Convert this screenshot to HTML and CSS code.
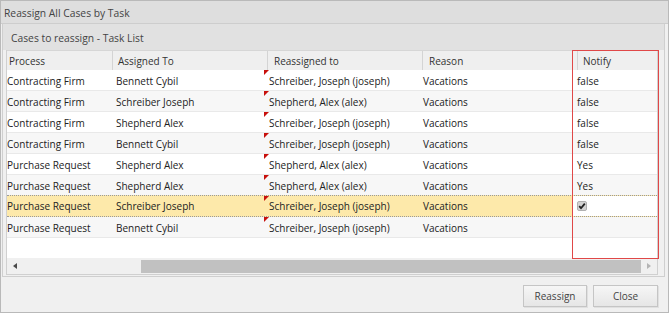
FILE: index.html
```html
<!DOCTYPE html>
<html>
<head>
<meta charset="utf-8">
<link rel="stylesheet" href="styles.css">
</head>
<body>
<div class="window">
  <div class="title">Reassign All Cases by Task</div>
  <div class="panel">
    <div class="panel-header">Cases to reassign - Task List</div>
    <div class="grid">
      <div class="ghead">
        <div class="hc h1">Process</div>
        <div class="hc h2">Assigned To</div>
        <div class="hc h3">Reassigned to</div>
        <div class="hc h4">Reason</div>
        <div class="hc h5">Notify</div>
      </div>
      <div class="gbody">
        <div class="row"><div class="c c1">Contracting Firm</div><div class="c c2">Bennett Cybil</div><div class="c c3 dirty">Schreiber, Joseph (joseph)</div><div class="c c4">Vacations</div><div class="c c5">false</div></div>
        <div class="row alt"><div class="c c1">Contracting Firm</div><div class="c c2">Schreiber Joseph</div><div class="c c3 dirty">Shepherd, Alex (alex)</div><div class="c c4">Vacations</div><div class="c c5">false</div></div>
        <div class="row"><div class="c c1">Contracting Firm</div><div class="c c2">Shepherd Alex</div><div class="c c3 dirty">Schreiber, Joseph (joseph)</div><div class="c c4">Vacations</div><div class="c c5">false</div></div>
        <div class="row alt"><div class="c c1">Contracting Firm</div><div class="c c2">Bennett Cybil</div><div class="c c3 dirty">Schreiber, Joseph (joseph)</div><div class="c c4">Vacations</div><div class="c c5">false</div></div>
        <div class="row"><div class="c c1">Purchase Request</div><div class="c c2">Shepherd Alex</div><div class="c c3 dirty">Shepherd, Alex (alex)</div><div class="c c4">Vacations</div><div class="c c5">Yes</div></div>
        <div class="row alt"><div class="c c1">Purchase Request</div><div class="c c2">Shepherd Alex</div><div class="c c3 dirty">Shepherd, Alex (alex)</div><div class="c c4">Vacations</div><div class="c c5">Yes</div></div>
        <div class="row sel"><div class="c c1">Purchase Request</div><div class="c c2">Schreiber Joseph</div><div class="c c3 dirty">Schreiber, Joseph (joseph)</div><div class="c c4">Vacations</div><div class="c c5 edit"><span class="chk"><svg width="8" height="8" viewBox="0 0 8 8"><path d="M1.2 4.2 L3 6.2 L6.8 1.6" fill="none" stroke="#222" stroke-width="1.8"/></svg></span></div></div>
        <div class="row alt"><div class="c c1">Purchase Request</div><div class="c c2">Bennett Cybil</div><div class="c c3 dirty">Schreiber, Joseph (joseph)</div><div class="c c4">Vacations</div><div class="c c5"></div></div>
      </div>
      <div class="hscroll">
        <div class="arr left"></div>
        <div class="track"><div class="thumb"></div></div>
        <div class="arr right"></div>
      </div>
    </div>
  </div>
  <div class="footer">
    <button class="btn b1">Reassign</button>
    <button class="btn b2">Close</button>
  </div>
  <div class="highlight"></div>
</div>
</body>
</html>
```

FILE: styles.css
```css
* { box-sizing: border-box; }
html, body { margin: 0; padding: 0; background: #fff; }
body { font-family: "Open Sans", "Noto Sans", sans-serif; font-size: 10px; color: #333; }

.window {
  position: relative;
  width: 669px;
  height: 313px;
  border: 1px solid #b9b9b9;
  background: #f0f0f0;
  display: flex;
  flex-direction: column;
}
.title {
  height: 23px;
  line-height: 24px;
  padding-left: 3px;
  background: #dedede;
  border-bottom: 1px solid #cdcdcd;
  font-size: 10.3px;
  color: #444;
}
.panel {
  margin: 0 3px 0 1px;
  border: 1px solid #cfcfcf;
  border-top: none;
  background: #f0f0f0;
  padding: 0 6px 1px 3px;
  display: flex;
  flex-direction: column;
}
.panel-header {
  height: 26px;
  line-height: 28px;
  padding-left: 8px;
  margin: 0 -6px 0 -3px;
  background: #e1e1e1;
  font-size: 10.3px;
  color: #444;
}
.grid {
  border: 1px solid #d0d0d0;
  border-top: none;
  background: #fff;
  display: flex;
  flex-direction: column;
}
.ghead {
  display: flex;
  height: 20px;
  background: #efefef;
  border-top: 1px solid #d6d6d6;
}
.hc {
  height: 19px;
  line-height: 20px;
  border-right: 1px solid #d4d4d4;
  font-size: 10px;
  color: #333;
  white-space: nowrap;
}
.h1 { width: 106px; padding-left: 2px; }
.h2 { width: 155px; padding-left: 5px; }
.h3 { width: 155px; padding-left: 6px; }
.h4 { width: 155px; padding-left: 6px; }
.h5 { flex: 1; padding-left: 5px; border-right: none; }

.gbody { height: 188px; }
.row {
  display: flex;
  height: 21px;
  border-bottom: 1px solid #e9e9e9;
  background: #fff;
}
.row.alt { background: #f7f7f7; }
.row.sel {
  background: #fde9aa;
  border-top: 1px dotted #9a9a9a;
  border-bottom: 1px dotted #9a9a9a;
  margin-top: -1px;
  height: 22px;
}
.c {
  line-height: 22px;
  white-space: nowrap;
  overflow: hidden;
  font-size: 10px;
  color: #222;
  position: relative;
}
.row.sel .c { line-height: 21px; }
.c1 { width: 106px; padding-left: 0; }
.c2 { width: 151px; padding-left: 3px; }
.c3 { width: 156px; padding-left: 5px; }
.c4 { width: 152px; padding-left: 3px; }
.c5 { flex: 1; padding-left: 5px; }
.c5.edit { background: #fff; display: flex; align-items: center; }
.dirty::before {
  content: "";
  position: absolute;
  left: 0;
  top: 0;
  border-top: 5px solid #c8100c;
  border-right: 5px solid transparent;
}
.chk {
  width: 10px;
  height: 10px;
  border-radius: 2px;
  background: #d3d3d3;
  border: 1px solid #b0b0b0;
  display: flex;
  align-items: center;
  justify-content: center;
}
.chk svg { display: block; }

.hscroll {
  height: 16px;
  background: #f0f0f0;
  display: flex;
  align-items: center;
}
.arr { width: 16px; height: 16px; position: relative; }
.arr.left::before {
  content: "";
  position: absolute;
  left: 6px; top: 5px;
  border-right: 4px solid #4a4a4a;
  border-top: 3.5px solid transparent;
  border-bottom: 3.5px solid transparent;
}
.arr.right::before {
  content: "";
  position: absolute;
  left: 6px; top: 5px;
  border-left: 4px solid #b4b4b4;
  border-top: 3.5px solid transparent;
  border-bottom: 3.5px solid transparent;
}
.track { flex: 1; height: 13px; padding-left: 118px; }
.thumb { height: 13px; background: #c1c1c1; }

.footer {
  flex: 1;
  display: flex;
  justify-content: flex-end;
  align-items: flex-start;
  gap: 6px;
  padding: 8px 10px 0 0;
}
.btn {
  height: 22px;
  border: 1px solid #c5c5c5;
  background: linear-gradient(#f6f6f6, #e6e6e6);
  font-family: "Open Sans", "Noto Sans", sans-serif;
  font-size: 10px;
  color: #444;
  padding: 0;
  box-shadow: 1px 1px 0 #e0e0e0;
}
.b1 { width: 64px; }
.b2 { width: 65px; }

.highlight {
  position: absolute;
  left: 571px;
  top: 49px;
  width: 87px;
  height: 209px;
  border: 1px solid #e04848;
  pointer-events: none;
}
```
